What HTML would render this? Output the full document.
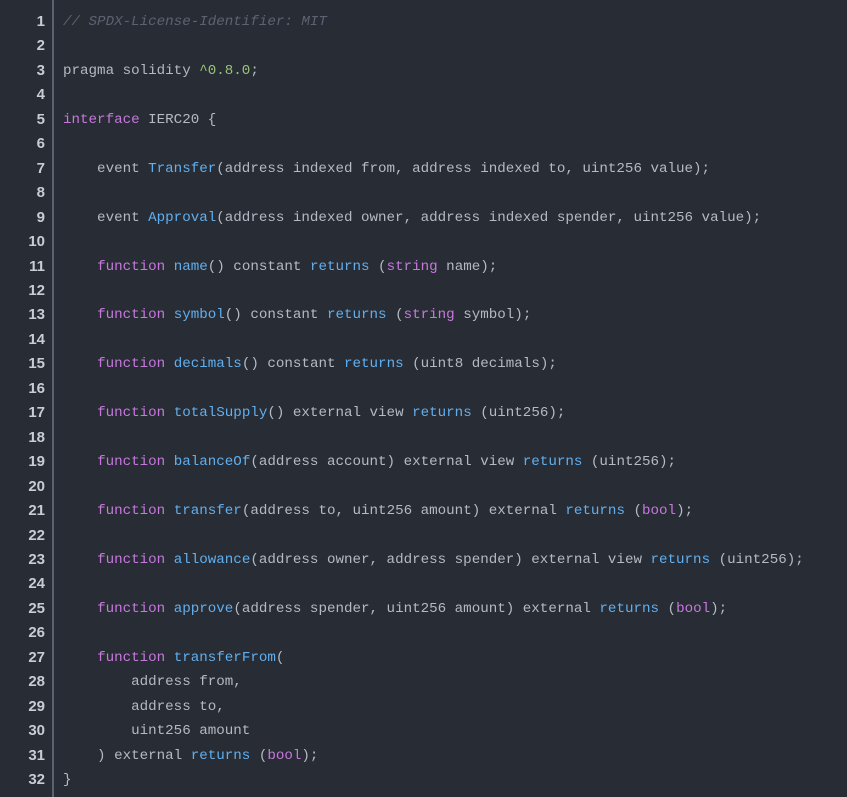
<!DOCTYPE html>
<html><head><meta charset="utf-8"><style>
html,body{margin:0;padding:0;background:#282c34;width:847px;height:797px;overflow:hidden}
.wrap{position:absolute;top:10px;left:0;font-family:"Liberation Mono",monospace;font-size:14.2px;line-height:24.45px;color:#b4bac4;white-space:pre}
.gut{position:absolute;left:0;width:45px;text-align:right;color:#c8ccd4;font-weight:bold;font-family:"Liberation Sans",sans-serif;font-size:15px}
.bar{position:absolute;left:52px;top:0;width:2px;height:797px;background:#5c6370}
.code{position:absolute;left:63px}
.c{color:#5c6370;font-style:italic}.k{color:#c678dd}.f{color:#61afef}.n{color:#98c379}
</style></head><body>
<div class="bar"></div>
<div class="wrap"><div class="gut">1
2
3
4
5
6
7
8
9
10
11
12
13
14
15
16
17
18
19
20
21
22
23
24
25
26
27
28
29
30
31
32</div><div class="code"><span class="c">// SPDX-License-Identifier: MIT</span>

pragma solidity <span class="n">^0.8.0</span>;

<span class="k">interface</span> IERC20 {

    event <span class="f">Transfer</span>(address indexed from, address indexed to, uint256 value);

    event <span class="f">Approval</span>(address indexed owner, address indexed spender, uint256 value);

    <span class="k">function</span> <span class="f">name</span>() constant <span class="f">returns</span> (<span class="k">string</span> name);

    <span class="k">function</span> <span class="f">symbol</span>() constant <span class="f">returns</span> (<span class="k">string</span> symbol);

    <span class="k">function</span> <span class="f">decimals</span>() constant <span class="f">returns</span> (uint8 decimals);

    <span class="k">function</span> <span class="f">totalSupply</span>() external view <span class="f">returns</span> (uint256);

    <span class="k">function</span> <span class="f">balanceOf</span>(address account) external view <span class="f">returns</span> (uint256);

    <span class="k">function</span> <span class="f">transfer</span>(address to, uint256 amount) external <span class="f">returns</span> (<span class="k">bool</span>);

    <span class="k">function</span> <span class="f">allowance</span>(address owner, address spender) external view <span class="f">returns</span> (uint256);

    <span class="k">function</span> <span class="f">approve</span>(address spender, uint256 amount) external <span class="f">returns</span> (<span class="k">bool</span>);

    <span class="k">function</span> <span class="f">transferFrom</span>(
        address from,
        address to,
        uint256 amount
    ) external <span class="f">returns</span> (<span class="k">bool</span>);
}</div></div>
</body></html>
